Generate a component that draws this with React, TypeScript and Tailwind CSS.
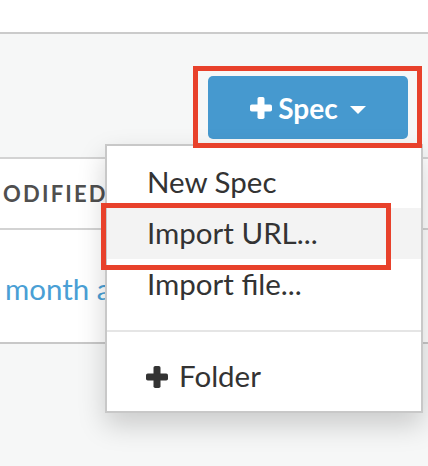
import React from "react";

function PlusIcon({ color }: { color: string }) {
  return (
    <svg width="22" height="22" viewBox="0 0 22 22" className="shrink-0">
      <rect x="7.5" y="0" width="7" height="22" rx="1.8" fill={color} />
      <rect x="0" y="7.5" width="22" height="7" rx="1.8" fill={color} />
    </svg>
  );
}

export default function App() {
  return (
    <div
      className="relative w-[428px] h-[466px] overflow-hidden bg-[#f6f7f7]"
      style={{ fontFamily: "Lato, 'Open Sans', sans-serif" }}
    >
      {/* top bar */}
      <div className="h-[34px] bg-white border-b-2 border-[#cbcbcb]" />

      {/* toolbar */}
      <div className="flex justify-end pr-[20px] pt-[42px]">
        <button className="flex h-[63px] w-[200px] items-center justify-center rounded-[5px] bg-[#4699cf] text-white">
          <PlusIcon color="#ffffff" />
          <span className="ml-[6px] text-[28px] font-bold leading-none">Spec</span>
          <svg width="16" height="8" viewBox="0 0 16 8" className="ml-[12px] mt-[4px]">
            <polygon points="0,0 16,0 8,8" fill="#ffffff" />
          </svg>
        </button>
      </div>

      {/* table */}
      <div className="mt-[18px] bg-white border-t-2 border-b-2 border-t-[#d3d3d3] border-b-[#c8c8c8]">
        <div className="flex h-[71px] items-center border-b-2 border-[#d3d3d3] pl-[3px]">
          <span className="text-[22px] font-bold uppercase tracking-[2.2px] text-[#4f4f4f]">ODIFIED</span>
        </div>
        <div className="h-[112px] pl-[5px] pt-[37px]">
          <span className="text-[29.5px] text-[#4a9fd5]">month ago</span>
        </div>
      </div>

      {/* dropdown menu */}
      <div className="absolute left-[105px] top-[144px] w-[318px] border-2 border-[#c8c8c8] bg-white pt-[11px] pb-[9px] text-[29.5px] text-[#333333] shadow-[0_12px_26px_rgba(0,0,0,0.18)]">
        <div className="flex h-[51px] items-center pl-[40px]">New Spec</div>
        <div className="flex h-[51px] items-center bg-[#f3f3f3] pl-[40px]">Import URL...</div>
        <div className="flex h-[51px] items-center pl-[40px]">Import file...</div>
        <div className="mt-[20px] mb-[19px] h-[2px] bg-[#e5e5e5]" />
        <div className="flex h-[51px] items-center pl-[39px]">
          <PlusIcon color="#333333" />
          <span className="ml-[11px]">Folder</span>
        </div>
      </div>

      {/* annotation boxes */}
      <div className="absolute left-[193px] top-[66px] h-[82px] w-[229px] border-[5px] border-[#e8412b]" />
      <div className="absolute left-[101px] top-[203px] h-[67px] w-[290px] border-[5px] border-[#e8412b]" />
    </div>
  );
}
